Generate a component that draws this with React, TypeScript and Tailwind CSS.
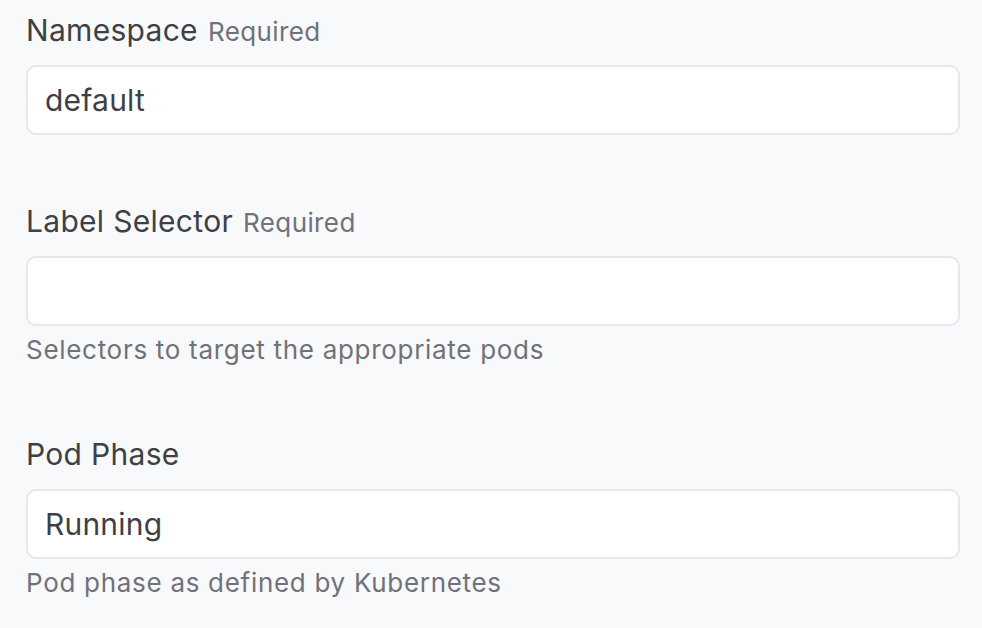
import React from 'react';

interface FieldProps {
  label: string;
  required?: boolean;
  value: string;
  help?: string;
}

const Field: React.FC<FieldProps> = ({ label, required, value, help }) => {
  return (
    <div className="flex flex-col">
      <label className="flex items-baseline gap-[10px] h-[40px] leading-[40px]">
        <span className="text-[30px] tracking-[0.3px] text-[#3f3f46]">{label}</span>
        {required && <span className="text-[26px] tracking-[0.4px] text-[#71717a]">Required</span>}
      </label>
      <input
        readOnly
        value={value}
        className="mt-[15px] h-[70px] w-full rounded-[10px] border-2 border-[#e6e6ec] bg-white px-[17px] text-[30px] tracking-[0.2px] text-[#3f3f46] outline-none"
      />
      {help && (
        <p className="mt-[8px] h-[32px] leading-[32px] text-[26px] tracking-[0.7px] text-[#71717a]">{help}</p>
      )}
    </div>
  );
};

export default function App() {
  return (
    <div
      className="h-[628px] w-[982px] overflow-hidden bg-[#f8f9fb] pl-[26px] pr-[22px] pt-[10px]"
      style={{ fontFamily: 'Inter, "Noto Sans", sans-serif' }}
    >
      <div className="flex flex-col gap-[66px]">
        <Field label="Namespace" required value="default" />
        <div className="flex flex-col gap-[68px]">
          <Field
            label="Label Selector"
            required
            value=""
            help="Selectors to target the appropriate pods"
          />
          <Field label="Pod Phase" value="Running" help="Pod phase as defined by Kubernetes" />
        </div>
      </div>
    </div>
  );
}
